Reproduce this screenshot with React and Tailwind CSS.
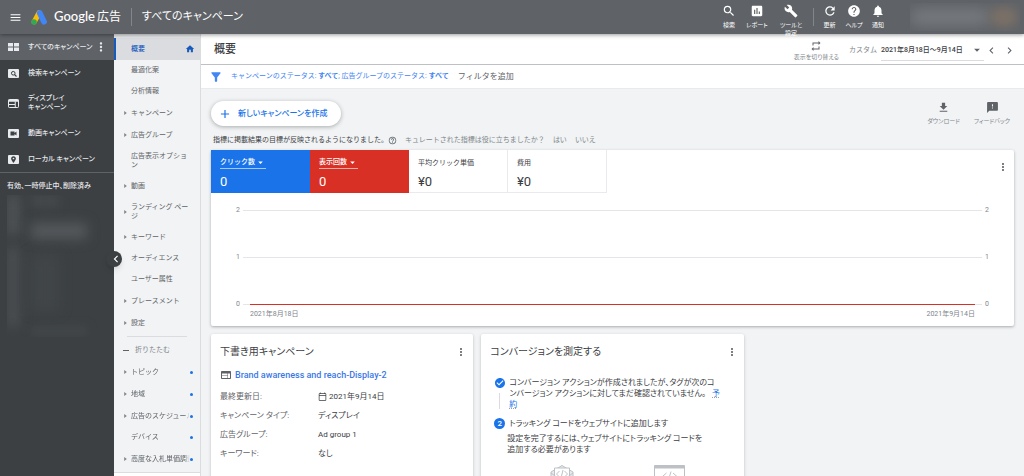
import React, { useState } from 'react';
import {
  MdMenu,
  MdSearch,
  MdAssessment,
  MdBuild,
  MdRefresh,
  MdHelp,
  MdHelpOutline,
  MdNotifications,
  MdRepeat,
  MdFilterAlt,
  MdAdd,
  MdFileDownload,
  MdFeedback,
  MdMoreVert,
  MdHome,
  MdWeb,
  MdArrowDropDown,
  MdChevronLeft,
  MdChevronRight,
  MdCheckCircle,
  MdOutlineCalendarToday,
} from 'react-icons/md';

const AdsLogo = () => (
  <svg viewBox="0 0 32 30" className="w-4 h-[15px] shrink-0" aria-hidden="true">
    <path d="M16 6 6.5 23.5" stroke="#fbbc04" strokeWidth="10.5" strokeLinecap="round" />
    <path d="M17.500 6 26 23.5" stroke="#4285f4" strokeWidth="11.5" strokeLinecap="round" />
    <circle cx="6" cy="24" r="5.6" fill="#34a853" />
  </svg>
);

const GridIcon = () => (
  <svg viewBox="0 0 22 16" className="w-[11px] h-2" fill="currentColor">
    <path d="M0 0h10v7H0zM12 0h10v7H12zM0 9h10v7H0zM12 9h10v7H12z" />
  </svg>
);

const SearchBoxIcon = () => (
  <svg viewBox="0 0 22 18" className="w-[11px] h-[9px]" fill="none">
    <rect width="22" height="18" rx="2" fill="currentColor" />
    <circle cx="10.5" cy="8.5" r="3.6" stroke="#3c4043" strokeWidth="2" />
    <path d="m13 11 4 4" stroke="#3c4043" strokeWidth="2.2" />
  </svg>
);

const DisplayIcon = () => (
  <svg viewBox="0 0 22 18" className="w-[11px] h-[9px]" fill="none" stroke="currentColor">
    <rect x="1" y="1" width="20" height="16" rx="1.5" strokeWidth="2" />
    <path d="M1 3.5h20" strokeWidth="4" />
    <path d="M1 11h13M14.5 5v12" strokeWidth="2" />
  </svg>
);

const VideoIcon = () => (
  <svg viewBox="0 0 22 18" className="w-[11px] h-[9px]">
    <rect width="22" height="18" rx="2" fill="currentColor" />
    <path d="M5 5h8v3l4-3v8l-4-3v3H5z" fill="#3c4043" />
  </svg>
);

const PinIcon = () => (
  <svg viewBox="0 0 22 18" className="w-[11px] h-[9px]">
    <rect width="22" height="18" rx="2" fill="currentColor" />
    <path d="M11 2.5c-2.8 0-4.8 2-4.8 4.6 0 3.2 4.8 8.9 4.8 8.9s4.8-5.7 4.8-8.9c0-2.6-2-4.6-4.8-4.6z" fill="#3c4043" />
    <circle cx="11" cy="7" r="1.7" fill="currentColor" />
  </svg>
);

const campaignTypes = [
  { label: 'すべてのキャンペーン', icon: GridIcon, active: true },
  { label: '検索キャンペーン', icon: SearchBoxIcon },
  { label: 'ディスプレイ\nキャンペーン', icon: DisplayIcon },
  { label: '動画キャンペーン', icon: VideoIcon },
  { label: 'ローカル キャンペーン', icon: PinIcon },
];

const pages = [
  { label: '最適化案' },
  { label: '分析情報' },
  { label: 'キャンペーン', expandable: true },
  { label: '広告グループ', expandable: true },
  { label: '広告表示オプショ\nン' },
  { label: '動画', expandable: true },
  { label: 'ランディング ペー\nジ', expandable: true },
  { label: 'キーワード', expandable: true },
  { label: 'オーディエンス' },
  { label: 'ユーザー属性' },
  { label: 'プレースメント', expandable: true },
  { label: '設定', expandable: true },
];

const morePages = [
  { label: 'トピック', expandable: true, dot: true },
  { label: '地域', expandable: true, dot: true },
  { label: '広告のスケジュール', expandable: true, dot: true },
  { label: 'デバイス', dot: true },
  { label: '高度な入札単価調整', expandable: true, dot: true },
];

const draftRows = [
  { label: '最終更新日:', value: '2021年9月14日', calendar: true },
  { label: 'キャンペーン タイプ:', value: 'ディスプレイ' },
  { label: '広告グループ:', value: 'Ad group 1' },
  { label: 'キーワード:', value: 'なし' },
];

const HeaderTool = ({ icon: Icon, label, width = 'w-7' }) => (
  <button className={`${width} flex flex-col items-center gap-[3px]`}>
    <Icon className="size-[14px] shrink-0" />
    <span className="text-[6px] leading-2 whitespace-pre-line text-center">{label}</span>
  </button>
);

const PageLink = ({ label, expandable, dot }) => {
  const multiline = label.includes('\n');
  let height = expandable ? 'h-[22px]' : 'h-[21px]';
  if (multiline) height = 'h-[29px]';

  return (
    <a href="#" className={`${height} flex items-center pl-[10px] pr-[7px] text-[#5f6368]`}>
      <span className="w-[7px] shrink-0">
        {expandable && (
          <svg viewBox="0 0 4 6" className="w-[3px] h-1" fill="#80868b">
            <path d="M0 0l4 3-4 3z" />
          </svg>
        )}
      </span>
      <span
        className={`flex-1 min-w-0 overflow-hidden whitespace-pre text-[7px] leading-[9px] ${
          dot ? 'mask-r-from-90%' : ''
        }`}
      >
        {label}
      </span>
      {dot && <span className="size-[3px] rounded-full bg-[#1a73e8] shrink-0" />}
    </a>
  );
};

const Header = () => (
  <header className="relative z-20 h-[34px] shrink-0 flex items-center bg-[#5f6368] text-white shadow-[0_1px_4px_rgba(0,0,0,0.4)]">
    <button aria-label="メニュー" className="ml-[9px]">
      <MdMenu className="size-[13px]" />
    </button>
    <a href="#" className="ml-[9px] flex items-center gap-[7px]">
      <AdsLogo />
      <span className="flex items-center gap-[2px] whitespace-nowrap">
        <span className="text-[13px] font-['Lato',sans-serif] font-medium">Google</span>
        <span className="text-xs">広告</span>
      </span>
    </a>
    <div className="ml-[10px] w-px h-[18px] bg-[#80868b]" />
    <h1 className="ml-[10px] text-[11px] whitespace-nowrap">すべてのキャンペーン</h1>

    <div className="ml-auto flex items-start pt-1 h-[34px]">
      <HeaderTool icon={MdSearch} label="検索" />
      <HeaderTool icon={MdAssessment} label="レポート" />
      <HeaderTool icon={MdBuild} label={'ツールと\n設定'} width="w-10" />
      <div className="mt-1 ml-[2px] mr-[3px] w-px h-[18px] bg-[#80868b]" />
      <HeaderTool icon={MdRefresh} label="更新" width="w-[25px]" />
      <HeaderTool icon={MdHelp} label="ヘルプ" width="w-6" />
      <HeaderTool icon={MdNotifications} label="通知" width="w-6" />
    </div>
    <div className="ml-5 mr-1 w-[110px] h-7 flex items-center overflow-hidden">
      <div className="w-20 h-4 rounded-full bg-[#777b7f] blur-[7px]" />
      <div className="w-7 h-5 rounded-full bg-[#7d7167] blur-[6px]" />
    </div>
  </header>
);

const CampaignNav = () => (
  <nav className="w-[114px] shrink-0 bg-[#3c4043] text-[#e8eaed]">
    {campaignTypes.map(({ label, icon: Icon, active }) => (
      <a
        key={label}
        href="#"
        className={`flex items-center pl-2 pr-[9px] text-[7px] leading-[9px] font-medium ${
          active ? 'bg-[#5f6368]' : ''
        } ${label.includes('\n') ? 'h-[34px]' : 'h-[26px]'}`}
      >
        <Icon />
        <span className="ml-[9px] flex-1 whitespace-pre">{label}</span>
        {active && <MdMoreVert className="size-[14px] shrink-0 -mr-[3px]" />}
      </a>
    ))}
    <div className="border-t border-[#5f6368] px-[7px] pt-2">
      <p className="text-[7px] leading-[10px] font-medium whitespace-nowrap">
        有効、一時停止中、削除済み
      </p>
      <div className="mt-1 h-[142px] flex gap-3 overflow-hidden">
        <div className="w-3 flex flex-col gap-3">
          <div className="h-10 bg-[#505457] blur-[6px]" />
          <div className="h-20 bg-[#4b4f52] blur-[6px]" />
        </div>
        <div className="flex-1 flex flex-col gap-4">
          <div className="w-7 h-3 bg-[#45494c] blur-[5px]" />
          <div className="w-14 h-4 bg-[#54585b] blur-[6px]" />
          <div className="w-7 h-14 bg-[#414548] blur-[6px]" />
          <div className="w-14 h-2 bg-[#44484b] blur-[5px]" />
        </div>
      </div>
    </div>
  </nav>
);

const PageNav = () => (
  <nav className="relative z-10 w-[87px] shrink-0 bg-[#f1f3f4] border-r border-[#dadce0] [font-feature-settings:normal]">
    <div className="h-1 bg-[#e4e6e8]" />
    <a
      href="#"
      className="h-[22px] flex items-center border-l-2 border-[#185abc] bg-[#dadce0] pl-[15px] pr-[5px] text-[#185abc]"
    >
      <span className="flex-1 text-[7px] font-medium">概要</span>
      <MdHome className="size-[10px]" />
    </a>
    {pages.map((page) => (
      <PageLink key={page.label} {...page} />
    ))}
    <hr className="mt-[2px] mx-[13px] border-[#dadce0]" />
    <button className="mt-[2px] h-[22px] w-full flex items-center pl-[9px] text-[7px] text-[#80868b]">
      <span className="w-[6px] h-px bg-[#5f6368] mr-[6px]" />
      折りたたむ
    </button>
    {morePages.map((page) => (
      <PageLink key={page.label} {...page} />
    ))}
    <div className="mt-[2px] h-5 border-t border-[#dadce0] bg-white" />
    <button
      aria-label="ナビゲーションを閉じる"
      className="absolute top-[217px] -left-2 size-4 rounded-full bg-[#3c4043] text-white flex items-center justify-center pl-1 shadow-md"
    >
      <MdChevronLeft className="size-[14px] shrink-0" />
    </button>
  </nav>
);

const TitleBar = () => (
  <div className="h-[31px] flex items-center bg-white border-b border-[#bdc1c6] pt-[3px] pl-[13px] pr-2 shadow-sm">
    <h2 className="text-[11px] font-medium text-[#3c4043]">概要</h2>
    <button className="ml-auto flex flex-col items-center gap-px text-[#5f6368]">
      <MdRepeat className="size-3" />
      <span className="text-[6px] leading-2 text-[#80868b]">表示を切り替える</span>
    </button>
    <span className="ml-[10px] text-[7px] text-[#80868b] [font-feature-settings:normal]">カスタム</span>
    <button className="ml-1 mr-px h-5 w-[103px] flex items-center justify-between border-b border-[#dadce0] text-[7px] text-[#3c4043] font-medium whitespace-nowrap">
      2021年8月18日～9月14日
      <MdArrowDropDown className="size-[14px] text-[#5f6368]" />
    </button>
    <button aria-label="前の期間" className="text-[#5f6368]">
      <MdChevronLeft className="size-[13px]" />
    </button>
    <button aria-label="次の期間" className="ml-[5px] text-[#5f6368]">
      <MdChevronRight className="size-[13px]" />
    </button>
  </div>
);

const FilterBar = () => (
  <div className="h-6 flex items-center bg-white border-b border-[#e8eaed] pl-2 text-[7px] text-[#4285f4] whitespace-nowrap [font-feature-settings:normal]">
    <MdFilterAlt className="size-[14px] mr-2" />
    <a href="#">
      キャンペーンのステータス: <b>すべて</b>; 広告グループのステータス: <b>すべて</b>
    </a>
    <button className="ml-[9px] text-[8px] text-[#5f6368]">フィルタを追加</button>
  </div>
);

const ToolButton = ({ icon: Icon, label }) => (
  <button className="flex flex-col items-center gap-[3px] text-[#5f6368]">
    <Icon className="size-[13px]" />
    <span className="text-[6px] leading-2 text-[#80868b]">{label}</span>
  </button>
);

const Metric = ({ label, value, tone }) => {
  const tones = {
    blue: 'bg-[#1a73e8] text-white',
    red: 'bg-[#d93025] text-white',
  };
  return (
    <div
      className={`w-[99px] h-[43px] pl-[9px] pt-[7px] [font-feature-settings:normal] ${
        tones[tone] || 'text-[#3c4043] border-r border-b border-[#e8eaed]'
      }`}
    >
      {tone ? (
        <button className="h-3 flex items-center border-b border-white/60 text-[7px] font-medium">
          {label}
          <MdArrowDropDown className="size-[11px]" />
        </button>
      ) : (
        <p className="h-3 flex items-center text-[7px]">{label}</p>
      )}
      <p className="mt-[5px] text-[13px] leading-4">{value}</p>
    </div>
  );
};

const Chart = () => (
  <div className="mt-3 px-[25px] text-[7px] leading-[10px] text-[#80868b]">
    <div className="flex flex-col gap-[37px]">
      {[2, 1, 0].map((tick) => (
        <div key={tick} className="h-[10px] flex items-center gap-[3px]">
          <span>{tick}</span>
          <div className={`flex-1 bg-[#e3e5e8] ${tick === 0 ? 'px-[7px] h-px' : 'h-px'}`}>
            {tick === 0 && <div className="h-full bg-[#d93025]" />}
          </div>
          <span>{tick}</span>
        </div>
      ))}
    </div>
    <div className="flex justify-between px-[14px]">
      <span>2021年8月18日</span>
      <span>2021年9月14日</span>
    </div>
  </div>
);

const Card = ({ title, children }) => (
  <section className="bg-white rounded-xs shadow-[0_1px_3px_rgba(60,64,67,0.3)] px-[9px] pt-[10px] h-[220px]">
    <div className="flex items-center justify-between">
      <h3 className="text-[10px] leading-4 text-[#3c4043]">{title}</h3>
      <button aria-label="その他" className="-mr-[3px] text-[#5f6368]">
        <MdMoreVert className="size-3" />
      </button>
    </div>
    {children}
  </section>
);

const DraftCard = () => (
  <Card title="下書き用キャンペーン">
    <a href="#" className="mt-[7px] flex items-center gap-[3px] text-[9px] leading-4 font-medium text-[#3b78e7] whitespace-nowrap">
      <MdWeb className="size-3 text-[#5f6368]" />
      Brand awareness and reach-Display-2
    </a>
    <dl className="mt-1 text-[8px] text-[#5f6368]">
      {draftRows.map(({ label, value, calendar }) => (
        <div key={label} className="h-[19px] flex items-center">
          <dt className="w-[98px]">{label}</dt>
          <dd className="flex items-center gap-[2px] text-[#3c4043]">
            {calendar && <MdOutlineCalendarToday className="size-[9px]" />}
            {value}
          </dd>
        </div>
      ))}
    </dl>
  </Card>
);

const ConversionCard = () => (
  <Card title="コンバージョンを測定する">
    <div className="mt-[17px] pl-1 flex gap-1 text-[8px] leading-[11px] text-[#3c4043]">
      <div className="w-[11px] flex flex-col items-center gap-1">
        <MdCheckCircle className="size-3 text-[#1a73e8]" />
        <div className="w-px h-4 bg-[#dadce0]" />
      </div>
      <p className="whitespace-nowrap">
        コンバージョン アクションが作成されましたが、タグが次のコ
        <br />
        ンバージョン アクションに対してまだ確認されていません。{' '}
        <a href="#" className="ml-1 text-[#1a73e8] underline decoration-dotted decoration-[#9aa0a6]">
          予<br />約
        </a>
      </p>
    </div>
    <div className="mt-2 pl-1 flex items-center gap-1 text-[8px] leading-[11px] text-[#3c4043]">
      <span className="size-[11px] rounded-full bg-[#1a73e8] text-white text-center font-medium">2</span>
      トラッキング コードをウェブサイトに追加します
    </div>
    <p className="mt-1 pl-[17px] text-[8px] leading-[11px] text-[#3c4043] whitespace-nowrap">
      設定を完了するには、ウェブサイトにトラッキング コードを
      <br />
      追加する必要があります
    </p>
    <div className="mt-[10px] pl-[11px] flex justify-center gap-20">
      <svg viewBox="0 0 48 48" className="size-6" fill="none" stroke="#bdc1c6" strokeWidth="2">
        <path d="M2 14 24 1l22 13v30H2z" fill="#e8eaed" />
        <path d="M9 6h30v24H9z" fill="#fff" />
        <path d="m19 12-6 6 6 6M29 12l6 6-6 6M26 10l-4 16" />
        <path d="m2 16 22 16 22-16" />
      </svg>
      <svg viewBox="0 0 62 48" className="w-[31px] h-6" fill="none" stroke="#bdc1c6" strokeWidth="2">
        <path d="M1 1h60v46H1z" fill="#fff" />
        <path d="M1 4h60" strokeWidth="6" />
        <path d="m25 16-8 7 8 7M38 16l8 7-8 7M34 13l-6 20" />
      </svg>
    </div>
  </Card>
);

function App() {
  const [answered, setAnswered] = useState(false);

  return (
    <div className="h-screen flex flex-col overflow-hidden bg-[#f1f3f4] font-['Roboto','Noto_Sans_CJK_JP',sans-serif] [font-feature-settings:'palt']">
      <Header />
      <div className="flex-1 min-h-0 flex">
        <CampaignNav />
        <PageNav />
        <main className="flex-1 min-w-0">
          <TitleBar />
          <FilterBar />
          <div className="px-[10px]">
            <div className="pt-3 flex items-start">
              <button className="h-[25px] flex items-center gap-[6px] rounded-full bg-white pl-[7px] pr-[13px] text-[8px] font-medium text-[#1a73e8] whitespace-nowrap shadow-[0_1px_4px_rgba(60,64,67,0.4)]">
                <MdAdd className="size-[14px]" />
                新しいキャンペーンを作成
              </button>
              <div className="ml-auto mr-1 flex gap-[14px]">
                <ToolButton icon={MdFileDownload} label="ダウンロード" />
                <ToolButton icon={MdFeedback} label="フィードバック" />
              </div>
            </div>
            <div className="mt-2 h-3 pl-[2px] flex items-center text-[7px] text-[#3c4043] whitespace-nowrap [font-feature-settings:normal]">
              指標に掲載結果の目標が反映されるようになりました。
              <MdHelpOutline className="size-[9px] text-[#5f6368]" />
              {!answered && (
                <div className="ml-2 flex gap-2 text-[#80868b]">
                  <span>キュレートされた指標は役に立ちましたか？</span>
                  <button onClick={() => setAnswered(true)}>はい</button>
                  <button onClick={() => setAnswered(true)}>いいえ</button>
                </div>
              )}
            </div>
            <section className="mt-1 h-[176px] bg-white rounded-xs shadow-[0_1px_3px_rgba(60,64,67,0.4)]">
              <div className="flex">
                <Metric label="クリック数" value="0" tone="blue" />
                <Metric label="表示回数" value="0" tone="red" />
                <Metric label="平均クリック単価" value="¥0" />
                <Metric label="費用" value="¥0" />
                <button aria-label="その他" className="ml-auto mr-[5px] mt-[11px] self-start text-[#5f6368]">
                  <MdMoreVert className="size-3" />
                </button>
              </div>
              <Chart />
            </section>
            <div className="mt-2 grid grid-cols-3 gap-2">
              <DraftCard />
              <ConversionCard />
            </div>
          </div>
        </main>
      </div>
    </div>
  );
}

export default App;
